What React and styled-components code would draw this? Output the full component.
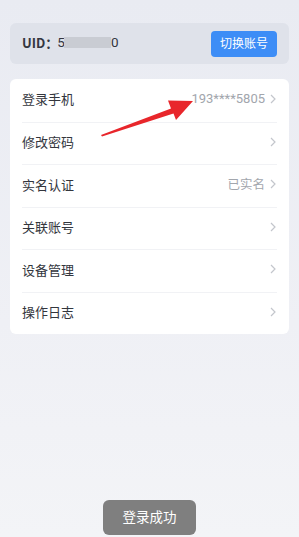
import React from "react";
import styled, { createGlobalStyle } from "styled-components";

const Global = createGlobalStyle`
  html, body { margin: 0; padding: 0; }
  body {
    font-family: "Noto Sans CJK SC", "Noto Sans", sans-serif;
    -webkit-font-smoothing: antialiased;
  }
`;

const Page = styled.div`
  position: relative;
  width: 299px;
  height: 537px;
  overflow: hidden;
  background: linear-gradient(180deg, #e9ebf2 0%, #eff0f5 60%, #f3f4f7 100%);
  padding: 23px 10px 0;
  box-sizing: border-box;
  display: flex;
  flex-direction: column;
  gap: 15px;
`;

const UidCard = styled.div`
  height: 41px;
  border-radius: 6px;
  background: #dfe2ea;
  display: flex;
  align-items: center;
  justify-content: space-between;
  padding: 0 12px 0 12px;
`;

const UidText = styled.div`
  display: flex;
  align-items: center;
  font-size: 13px;
  line-height: 1;
  color: #333640;
  padding-bottom: 2px;
`;

const UidLabel = styled.span`
  font-weight: 700;
  margin-right: -1px;
`;

const Digit = styled.span`
  font-family: Roboto, "Noto Sans", sans-serif;
  font-size: 13.5px;
`;

const Blur = styled.span`
  display: inline-block;
  width: 47px;
  height: 11px;
  background: #c9ccd3;
  margin-left: -1px;
`;

const SwitchButton = styled.button`
  width: 66px;
  height: 26px;
  border: none;
  border-radius: 4px;
  background: #3d8df6;
  color: #fff;
  font-family: inherit;
  font-size: 12px;
  line-height: 1;
  padding: 0 0 1px;
`;

const List = styled.div`
  background: #fff;
  border-radius: 6px;
  padding: 0 12px;
`;

const Row = styled.div`
  height: 42.5px;
  display: flex;
  align-items: center;
  justify-content: space-between;
  border-top: ${(p) => (p.$first ? "none" : "1px solid #f1f2f5")};
  box-sizing: border-box;
  padding-bottom: 3px;
`;

const Label = styled.span`
  font-size: 13px;
  line-height: 1;
  color: #33363d;
`;

const Right = styled.div`
  display: flex;
  align-items: center;
  gap: 5px;
  margin-right: 1px;
`;

const Value = styled.span`
  font-family: Roboto, "Noto Sans CJK SC", sans-serif;
  font-size: 13px;
  line-height: 1;
  color: #a2a6ad;
  ${(p) => p.$cjk && `font-family: "Noto Sans CJK SC", sans-serif; font-size: 12.5px;`}
`;

const Chevron = () => (
  <svg width="6" height="10" viewBox="0 0 6 10">
    <path d="M1 1 L5 5 L1 9" fill="none" stroke="#c3c6cc" strokeWidth="1.2" />
  </svg>
);

const Arrow = styled.svg`
  position: absolute;
  left: 0;
  top: 0;
  pointer-events: none;
`;

const Toast = styled.div`
  position: absolute;
  left: 103px;
  top: 500px;
  width: 93px;
  height: 35px;
  border-radius: 6px;
  background: #7f7f7f;
  color: #fff;
  font-size: 13.5px;
  line-height: 1;
  padding-bottom: 2px;
  box-sizing: border-box;
  display: flex;
  align-items: center;
  justify-content: center;
`;

const rows = [
  { label: "登录手机", value: "193****5805" },
  { label: "修改密码" },
  { label: "实名认证", value: "已实名", cjk: true },
  { label: "关联账号" },
  { label: "设备管理" },
  { label: "操作日志" },
];

export default function App() {
  return (
    <>
      <Global />
      <Page>
        <UidCard>
          <UidText>
            <UidLabel>UID：</UidLabel>
            <Digit>5</Digit>
            <Blur />
            <Digit>0</Digit>
          </UidText>
          <SwitchButton>切换账号</SwitchButton>
        </UidCard>
        <List>
          {rows.map((r, i) => (
            <Row key={r.label} $first={i === 0}>
              <Label>{r.label}</Label>
              <Right>
                {r.value && <Value $cjk={r.cjk}>{r.value}</Value>}
                <Chevron />
              </Right>
            </Row>
          ))}
        </List>
        <Arrow width="299" height="537" viewBox="0 0 299 537">
          <polygon
            points="101,135 171,108.5 168,100.5 193,101 176,120 173.5,113.5 102,136.5"
            fill="#e8262b"
          />
        </Arrow>
        <Toast>登录成功</Toast>
      </Page>
    </>
  );
}
